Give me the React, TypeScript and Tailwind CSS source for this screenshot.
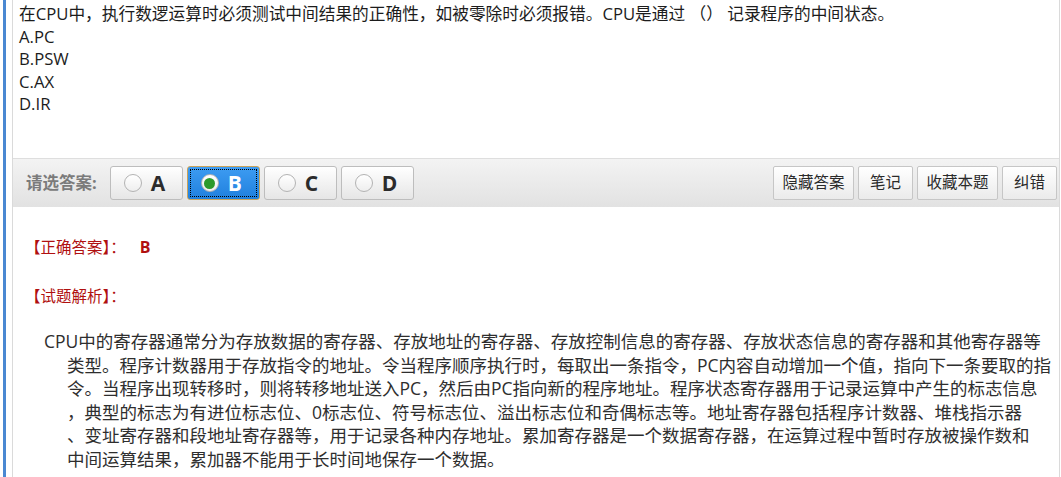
import React from "react";

const options = ["A", "B", "C", "D"];
const selected = "B";

const tools = [
  { label: "隐藏答案", w: "w-[81px]" },
  { label: "笔记", w: "w-[55px]" },
  { label: "收藏本题", w: "w-[81px]" },
  { label: "纠错", w: "w-[55px]" },
];

const analysis = [
  "CPU中的寄存器通常分为存放数据的寄存器、存放地址的寄存器、存放控制信息的寄存器、存放状态信息的寄存器和其他寄存器等",
  "类型。程序计数器用于存放指令的地址。令当程序顺序执行时，每取出一条指令，PC内容自动增加一个值，指向下一条要取的指",
  "令。当程序出现转移时，则将转移地址送入PC，然后由PC指向新的程序地址。程序状态寄存器用于记录运算中产生的标志信息",
  "，典型的标志为有进位标志位、0标志位、符号标志位、溢出标志位和奇偶标志等。地址寄存器包括程序计数器、堆栈指示器",
  "、变址寄存器和段地址寄存器等，用于记录各种内存地址。累加寄存器是一个数据寄存器，在运算过程中暂时存放被操作数和",
  "中间运算结果，累加器不能用于长时间地保存一个数据。",
];

function OptionButton({ letter }: { letter: string }) {
  const on = letter === selected;
  return (
    <button
      type="button"
      className={`flex h-[34px] w-[73px] items-center rounded-[3px] border pl-[13px] ${
        on
          ? "border-[#c9a35a] bg-linear-to-b from-[#3d9cf2] to-[#1f80de] outline-1 outline-dotted outline-black outline-offset-[-4px]"
          : "border-[#bdbdbd] bg-linear-to-b from-white to-[#e6e6e6]"
      }`}
    >
      <span className="flex h-[18px] w-[18px] items-center justify-center rounded-full border border-[#b3b3b3] bg-linear-to-b from-white to-[#eeeeee]">
        {on && <span className="h-[11px] w-[11px] rounded-full bg-[#2c9a2c]" />}
      </span>
      <span className={`ml-[9px] text-[21px] font-bold leading-none ${on ? "text-white" : "text-[#2b2b2b]"}`}>
        {letter}
      </span>
    </button>
  );
}

export default function App() {
  return (
    <div
      className="flex h-[477px] w-[1061px] overflow-hidden bg-white"
      style={{ fontFamily: '"Open Sans", "Noto Sans CJK SC", sans-serif' }}
    >
      <div className="ml-[3px] w-[3px] bg-[#4a88d2]" />
      <div className="ml-[6px] flex w-[1048px] flex-col border-x border-[#dadada]">
        <div className="h-[159px] shrink-0 border-b border-[#dedede] pl-[6px] pt-[3px] text-[16.7px] leading-[22.5px] text-[#1c1c1c]">
          <div>在CPU中，执行数逻运算时必须测试中间结果的正确性，如被零除时必须报错。CPU是通过 （） 记录程序的中间状态。</div>
          <div>A.PC</div>
          <div>B.PSW</div>
          <div>C.AX</div>
          <div>D.IR</div>
        </div>

        <div className="flex h-[48px] shrink-0 items-center bg-linear-to-b from-[#f3f3f3] to-[#e2e2e2] pl-[13px] pr-[2px]">
          <span className="text-[16.5px] font-bold text-[#7b7b7b]">请选答案:</span>
          <div className="ml-[13px] flex gap-[4px]">
            {options.map((o) => (
              <OptionButton key={o} letter={o} />
            ))}
          </div>
          <div className="ml-auto flex gap-[4px]">
            {tools.map((t) => (
              <button
                key={t.label}
                type="button"
                className={`${t.w} h-[34px] rounded-[2px] border border-[#c6c6c6] bg-linear-to-b from-white to-[#ebebeb] text-[15.5px] text-[#2a2a2a]`}
              >
                {t.label}
              </button>
            ))}
          </div>
        </div>

        <div className="pl-[12px] pt-[28px] text-[15.5px] leading-[24px] text-[#b01010]">
          <div>
            【正确答案】：<span className="ml-[14px] text-[16px] font-bold">B</span>
          </div>
          <div className="mt-[25px]">【试题解析】：</div>
        </div>

        <p className="mt-[22px] whitespace-nowrap pl-[54px] -indent-[23px] text-[17.5px] leading-[23.5px] text-[#2e2e2e]">
          {analysis.map((line, i) => (
            <React.Fragment key={i}>
              {i > 0 && <br />}
              {line}
            </React.Fragment>
          ))}
        </p>
      </div>
    </div>
  );
}
